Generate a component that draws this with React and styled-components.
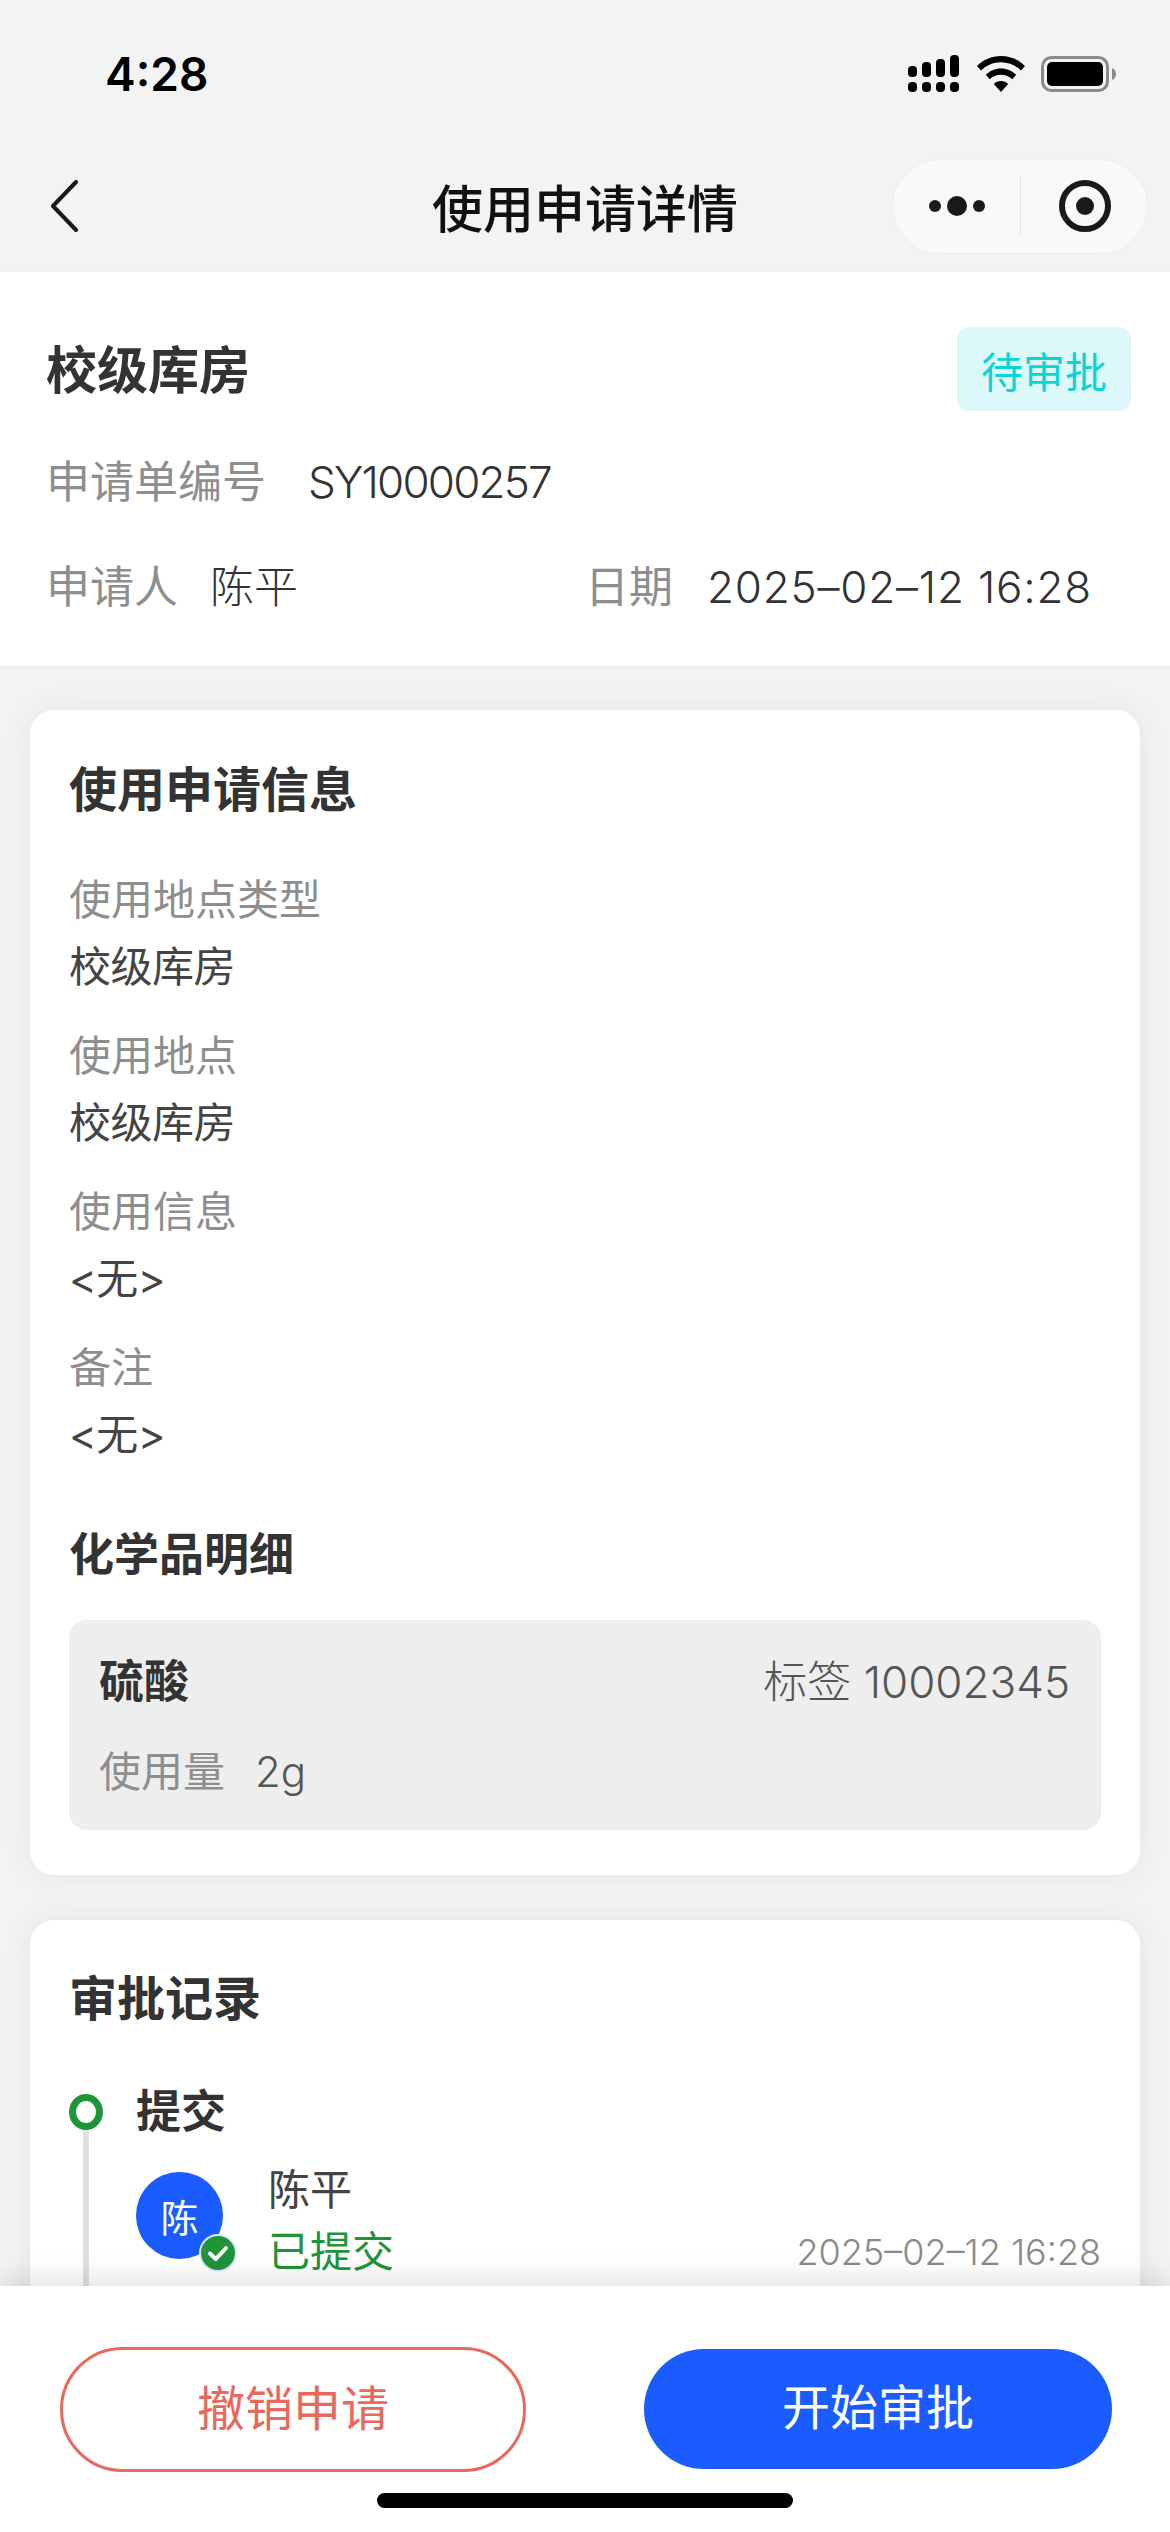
import React from "react";
import styled, { createGlobalStyle } from "styled-components";

const GlobalStyle = createGlobalStyle`
  html, body {
    margin: 0;
    padding: 0;
    background: #f3f3f3;
  }
  * {
    box-sizing: border-box;
  }
`;

const fontStack = `Inter, "Noto Sans CJK SC", sans-serif`;

const Screen = styled.div`
  position: relative;
  width: 1170px;
  height: 2532px;
  overflow: hidden;
  background: #f3f3f3;
  font-family: ${fontStack};
  color: #333;
`;

const StatusBar = styled.div`
  display: flex;
  align-items: center;
  justify-content: space-between;
  height: 140px;
  padding: 8px 53px 0 105px;
`;

const Clock = styled.span`
  font-size: 46px;
  font-weight: 600;
  color: #000;
`;

const StatusIcons = styled.div`
  display: flex;
  align-items: center;
  gap: 16px;
`;

const NavBar = styled.div`
  position: relative;
  display: flex;
  align-items: center;
  justify-content: space-between;
  height: 132px;
  padding: 0 22px 0 50px;
`;

const NavTitle = styled.h1`
  position: absolute;
  left: 0;
  right: 0;
  margin: 0;
  text-align: center;
  font-size: 51px;
  font-weight: 500;
  color: #111;
  pointer-events: none;
`;

const Capsule = styled.div`
  display: flex;
  align-items: center;
  width: 256px;
  height: 95px;
  padding-left: 36px;
  border: 1px solid #eeeeee;
  border-radius: 48px;
  background: #f9f9f9;
`;

const CapsuleDivider = styled.span`
  width: 1px;
  height: 60px;
  margin: 0 38px 0 35px;
  background: #e2e2e2;
`;

const Header = styled.section`
  padding: 55px 39px 49px 46px;
  background: #fff;
  box-shadow: 0 1px 4px rgba(0, 0, 0, 0.04);
`;

const HeaderTop = styled.div`
  display: flex;
  align-items: center;
  justify-content: space-between;
  margin-bottom: 41px;
`;

const PlaceName = styled.h2`
  margin: 0 0 4px;
  font-size: 51px;
  font-weight: 700;
  color: #333;
`;

const StatusTag = styled.span`
  display: flex;
  align-items: center;
  justify-content: center;
  width: 174px;
  height: 84px;
  border-radius: 12px;
  background: #dcf8f9;
  color: #0bd4d4;
  font-size: 42px;
`;

const MetaRow = styled.div`
  display: flex;
  align-items: center;
  justify-content: space-between;
  height: 60px;
  padding-right: 39px;
  & + & {
    margin-top: 45px;
  }
`;

const MetaItem = styled.div`
  display: flex;
  align-items: center;
  gap: ${(p) => p.$gap}px;
  font-size: 44px;
  line-height: 60px;
`;

const MetaLabel = styled.span`
  color: #8e8e8e;
`;

const MetaValue = styled.span`
  color: #333;
  font-weight: 300;
  letter-spacing: ${(p) => p.$spacing || 0}px;
`;

const Content = styled.main`
  display: flex;
  flex-direction: column;
  gap: 45px;
  padding: 44px 30px 0;
`;

const Card = styled.section`
  padding: ${(p) => p.$top}px 39px ${(p) => p.$bottom}px 39px;
  border-radius: 24px;
  background: #fff;
  box-shadow: 0 0 30px rgba(0, 0, 0, 0.07);
`;

const CardTitle = styled.h3`
  margin: 0;
  font-size: 48px;
  line-height: 60px;
  font-weight: 700;
  color: #333;
`;

const FieldList = styled.dl`
  display: flex;
  flex-direction: column;
  gap: 29px;
  margin: 50px 0 0;
`;

const Field = styled.div`
  display: flex;
  flex-direction: column;
  gap: 7px;
  font-size: 42px;
  line-height: 60px;
`;

const FieldLabel = styled.dt`
  color: #8e8e8e;
`;

const FieldValue = styled.dd`
  margin: 0;
  color: #444;
  letter-spacing: -0.5px;
`;

const SectionTitle = styled.h4`
  margin: 60px 0 35px;
  font-size: 45px;
  line-height: 60px;
  font-weight: 700;
  color: #333;
`;

const ItemBox = styled.div`
  display: flex;
  flex-direction: column;
  gap: 30px;
  padding: 32px 31px 28px 30px;
  border-radius: 18px;
  background: #eeeeee;
`;

const ItemRow = styled.div`
  display: flex;
  align-items: center;
  justify-content: space-between;
  line-height: 60px;
`;

const ItemName = styled.span`
  font-size: 45px;
  font-weight: 700;
  color: #333;
`;

const ItemTag = styled.span`
  font-size: 44px;
  font-weight: 300;
  color: #555;
`;

const Usage = styled.div`
  display: flex;
  gap: 30px;
  font-size: 42px;
  line-height: 60px;
  color: #8e8e8e;
  span + span {
    font-size: 42px;
    font-weight: 300;
    color: #555;
  }
`;

const Step = styled.div`
  display: flex;
  gap: 33px;
  margin-top: 53px;
`;

const Rail = styled.div`
  display: flex;
  flex-direction: column;
  align-items: center;
  flex: none;
  width: 34px;
  padding-top: 12px;
`;

const RailDot = styled.span`
  flex: none;
  width: 34px;
  height: 36px;
  border: 7px solid #1f9438;
  border-radius: 50%;
`;

const RailLine = styled.span`
  flex: 1;
  width: 6px;
  background: #e0e0e0;
`;

const StepBody = styled.div`
  flex: 1;
  padding-bottom: 70px;
`;

const StepTitle = styled.div`
  font-size: 45px;
  line-height: 60px;
  font-weight: 700;
  color: #333;
`;

const Person = styled.div`
  display: flex;
  gap: 45px;
  margin-top: 18px;
`;

const AvatarWrap = styled.div`
  position: relative;
  flex: none;
  width: 87px;
  height: 87px;
  margin-top: 12px;
`;

const Avatar = styled.div`
  display: flex;
  align-items: center;
  justify-content: center;
  width: 100%;
  height: 100%;
  border-radius: 50%;
  background: #1a5cff;
  color: #fff;
  font-size: 38px;
`;

const CheckBadge = styled.svg`
  position: absolute;
  right: -14px;
  bottom: -13px;
  width: 38px;
  height: 38px;
`;

const PersonInfo = styled.div`
  flex: 1;
  display: flex;
  flex-direction: column;
  gap: 2px;
  font-size: 42px;
  line-height: 60px;
`;

const PersonName = styled.span`
  color: #444;
`;

const PersonStatus = styled.div`
  display: flex;
  align-items: center;
  justify-content: space-between;
  color: #1f9438;
`;

const StepTime = styled.span`
  font-size: 36px;
  font-weight: 300;
  color: #8a8a8a;
`;

const Footer = styled.footer`
  position: absolute;
  left: 0;
  right: 0;
  bottom: 0;
  display: flex;
  align-items: flex-start;
  justify-content: space-between;
  height: 246px;
  padding: 61px 58px 0 60px;
  background: #fff;
  box-shadow: 0 -4px 30px rgba(0, 0, 0, 0.14);
`;

const PillButton = styled.button`
  display: flex;
  align-items: center;
  justify-content: center;
  width: ${(p) => (p.$primary ? 468 : 466)}px;
  height: ${(p) => (p.$primary ? 120 : 125)}px;
  margin-top: ${(p) => (p.$primary ? 2 : 0)}px;
  padding: 0 0 10px;
  border: ${(p) => (p.$primary ? "none" : "3px solid #e8695c")};
  border-radius: 63px;
  background: ${(p) => (p.$primary ? "#1a5cff" : "#fff")};
  color: ${(p) => (p.$primary ? "#fff" : "#e8695c")};
  font-family: inherit;
  font-size: 48px;
`;

const HomeIndicator = styled.span`
  position: absolute;
  left: 377px;
  bottom: 24px;
  width: 416px;
  height: 15px;
  border-radius: 8px;
  background: #000;
`;

const SignalIcon = () => (
  <svg width="53" height="38" viewBox="0 0 53 38" fill="#000">
    <rect x="0" y="11" width="9" height="11" rx="4" />
    <rect x="14" y="7" width="9" height="15" rx="4" />
    <rect x="28" y="4" width="9" height="18" rx="4" />
    <rect x="42" y="0" width="9" height="22" rx="4" />
    <rect x="0" y="27" width="9" height="10" rx="4" />
    <rect x="14" y="27" width="9" height="10" rx="4" />
    <rect x="28" y="27" width="9" height="10" rx="4" />
    <rect x="42" y="27" width="9" height="10" rx="4" />
  </svg>
);

const WifiIcon = () => (
  <svg width="48" height="36" viewBox="0 0 48 36" fill="#000">
    <path d="M24 0C33.500 0 41.800 3.700 48 10L44 14.500C38.800 9.300 31.800 6.200 24 6.200S9.200 9.300 4 14.500L0 10C6.200 3.700 14.500 0 24 0Z" />
    <path d="M24 12.500C30 12.500 35.300 14.900 39.200 18.800L35.200 23.200C32.300 20.400 28.400 18.700 24 18.700S15.700 20.400 12.800 23.200L8.800 18.800C12.700 14.900 18 12.500 24 12.500Z" />
    <path d="M24 25C26.900 25 29.400 26.100 31.200 27.900L24 36L16.800 27.900C18.600 26.100 21.100 25 24 25Z" />
  </svg>
);

const BatteryIcon = () => (
  <svg width="76" height="36" viewBox="0 0 76 36">
    <rect x="1.500" y="1.500" width="65" height="33" rx="9" fill="none" stroke="#8a8a8a" strokeWidth="3" />
    <rect x="6" y="6" width="56" height="24" rx="5" fill="#000" />
    <path d="M71 12C73.500 13 75 15.300 75 18S73.500 23 71 24Z" fill="#8a8a8a" />
  </svg>
);

const BackIcon = () => (
  <svg width="28" height="52" viewBox="0 0 28 52" fill="none">
    <path d="M26 2L3 26L26 50" stroke="#1a1a1a" strokeWidth="4" strokeLinecap="round" strokeLinejoin="round" />
  </svg>
);

const MoreIcon = () => (
  <svg width="56" height="20" viewBox="0 0 56 20" fill="#1a1a1a">
    <circle cx="6" cy="10" r="6" />
    <circle cx="28" cy="10" r="10" />
    <circle cx="50" cy="10" r="6" />
  </svg>
);

const TargetIcon = () => (
  <svg width="52" height="52" viewBox="0 0 52 52" fill="none">
    <circle cx="26" cy="26" r="23" stroke="#1a1a1a" strokeWidth="6" />
    <circle cx="26" cy="26" r="9" fill="#1a1a1a" />
  </svg>
);

const fields = [
  ["使用地点类型", "校级库房"],
  ["使用地点", "校级库房"],
  ["使用信息", "<无>"],
  ["备注", "<无>"],
];

export default function App() {
  return (
    <>
      <GlobalStyle />
      <Screen>
        <StatusBar>
          <Clock>4:28</Clock>
          <StatusIcons>
            <SignalIcon />
            <WifiIcon />
            <BatteryIcon />
          </StatusIcons>
        </StatusBar>
        <NavBar>
          <BackIcon />
          <NavTitle>使用申请详情</NavTitle>
          <Capsule>
            <MoreIcon />
            <CapsuleDivider />
            <TargetIcon />
          </Capsule>
        </NavBar>

        <Header>
          <HeaderTop>
            <PlaceName>校级库房</PlaceName>
            <StatusTag>待审批</StatusTag>
          </HeaderTop>
          <MetaRow>
            <MetaItem $gap={42}>
              <MetaLabel>申请单编号</MetaLabel>
              <MetaValue $spacing={-1.8}>SY10000257</MetaValue>
            </MetaItem>
          </MetaRow>
          <MetaRow>
            <MetaItem $gap={32}>
              <MetaLabel>申请人</MetaLabel>
              <MetaValue>陈平</MetaValue>
            </MetaItem>
            <MetaItem $gap={34}>
              <MetaLabel>日期</MetaLabel>
              <MetaValue $spacing={0.8}>2025–02–12 16:28</MetaValue>
            </MetaItem>
          </MetaRow>
        </Header>

        <Content>
          <Card $top={50} $bottom={45}>
            <CardTitle>使用申请信息</CardTitle>
            <FieldList>
              {fields.map(([label, value]) => (
                <Field key={label}>
                  <FieldLabel>{label}</FieldLabel>
                  <FieldValue>{value}</FieldValue>
                </Field>
              ))}
            </FieldList>
            <SectionTitle>化学品明细</SectionTitle>
            <ItemBox>
              <ItemRow>
                <ItemName>硫酸</ItemName>
                <ItemTag>标签 10002345</ItemTag>
              </ItemRow>
              <Usage>
                <span>使用量</span>
                <span>2g</span>
              </Usage>
            </ItemBox>
          </Card>

          <Card $top={49} $bottom={0}>
            <CardTitle>审批记录</CardTitle>
            <Step>
              <Rail>
                <RailDot />
                <RailLine />
              </Rail>
              <StepBody>
                <StepTitle>提交</StepTitle>
                <Person>
                  <AvatarWrap>
                    <Avatar>陈</Avatar>
                    <CheckBadge viewBox="0 0 38 38">
                      <circle cx="19" cy="19" r="19" fill="#dfe9ff" />
                      <circle cx="19" cy="19" r="17" fill="#1f9438" />
                      <path d="M11 19.500L16.800 25L27 14" fill="none" stroke="#fff" strokeWidth="4" strokeLinecap="round" strokeLinejoin="round" />
                    </CheckBadge>
                  </AvatarWrap>
                  <PersonInfo>
                    <PersonName>陈平</PersonName>
                    <PersonStatus>
                      <span>已提交</span>
                      <StepTime>2025–02–12 16:28</StepTime>
                    </PersonStatus>
                  </PersonInfo>
                </Person>
              </StepBody>
            </Step>
          </Card>
        </Content>

        <Footer>
          <PillButton>撤销申请</PillButton>
          <PillButton $primary>开始审批</PillButton>
          <HomeIndicator />
        </Footer>
      </Screen>
    </>
  );
}
